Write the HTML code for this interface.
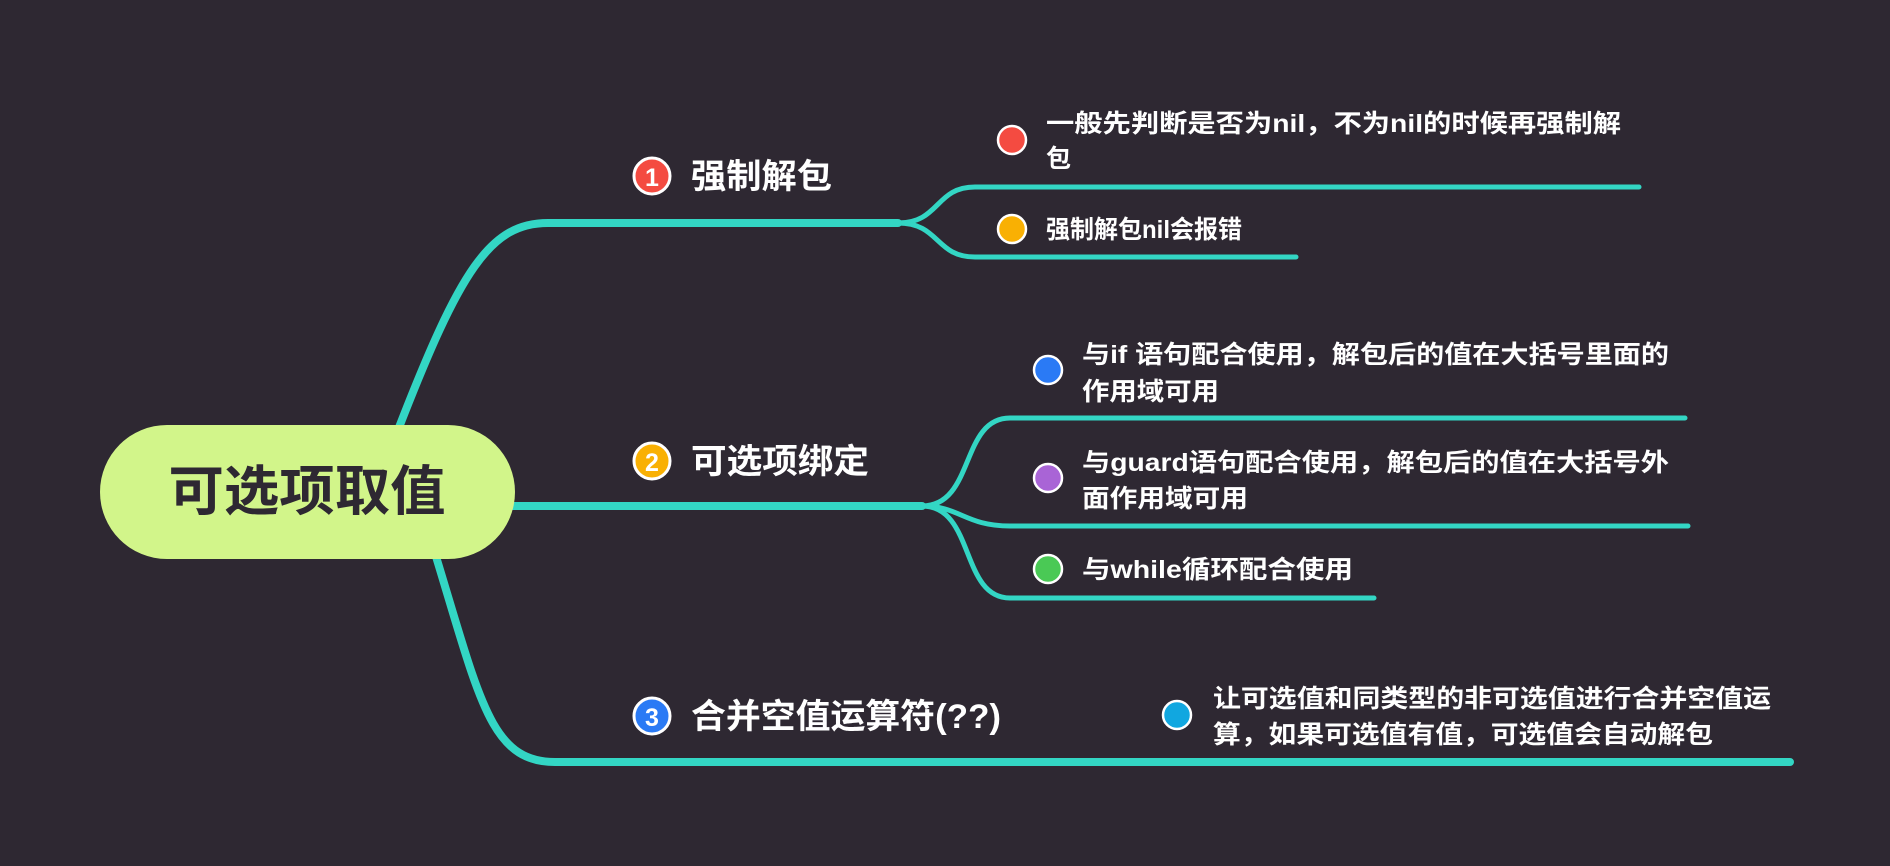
<!DOCTYPE html>
<html><head><meta charset="utf-8"><style>
html,body{margin:0;padding:0;background:#2e2832;width:1890px;height:866px;overflow:hidden}
svg{display:block}
text{font-family:"Liberation Sans","Noto Sans CJK SC",sans-serif;font-weight:bold;fill:#fff}
</style></head><body>
<svg width="1890" height="866" viewBox="0 0 1890 866" xmlns="http://www.w3.org/2000/svg">
<g fill="none" stroke="#33d6c4" stroke-linecap="round">
 <path d="M398,430 C460,270 490,223 548,223 L898,223" stroke-width="8"/>
 <path d="M898,223 C940,223 935,187 975,187 L1639,187" stroke-width="5"/>
 <path d="M898,223 C940,223 935,257 975,257 L1296,257" stroke-width="5"/>
 <path d="M500,506 L922,506" stroke-width="8"/>
 <path d="M922,506 C975,506 960,418 1010,418 L1685,418" stroke-width="5"/>
 <path d="M922,506 C960,506 965,526 1010,526 L1688,526" stroke-width="5"/>
 <path d="M922,506 C975,506 960,598 1010,598 L1374,598" stroke-width="5"/>
 <path d="M434,550 C480,700 490,762 555,762 L1790,762" stroke-width="8"/>
</g>
<rect x="100" y="425" width="415" height="134" rx="67" fill="#d2f58a"/>
<text x="307" y="510" text-anchor="middle" font-size="54" textLength="277" lengthAdjust="spacingAndGlyphs" style="fill:#2e2832">可选项取值</text>

<g stroke="#fff" stroke-width="3">
 <circle cx="652" cy="176" r="18" fill="#f44b41"/>
 <circle cx="652" cy="461" r="18" fill="#f9b003"/>
 <circle cx="652" cy="716" r="18" fill="#2a7af5"/>
</g>
<text x="652" y="186" text-anchor="middle" font-size="25">1</text>
<text x="652" y="471" text-anchor="middle" font-size="25">2</text>
<text x="652" y="726" text-anchor="middle" font-size="25">3</text>
<text x="691" y="188" font-size="34" textLength="141" lengthAdjust="spacingAndGlyphs">强制解包</text>
<text x="691" y="473" font-size="34" textLength="178" lengthAdjust="spacingAndGlyphs">可选项绑定</text>
<text x="691" y="728" font-size="34" textLength="310" lengthAdjust="spacingAndGlyphs">合并空值运算符(??)</text>

<g stroke="#fff" stroke-width="2.5">
 <circle cx="1012" cy="140" r="14" fill="#f44b41"/>
 <circle cx="1012" cy="229" r="14" fill="#f9b003"/>
 <circle cx="1048" cy="370" r="14" fill="#2a7af5"/>
 <circle cx="1048" cy="478" r="14" fill="#a964d6"/>
 <circle cx="1048" cy="569" r="14" fill="#4ac955"/>
 <circle cx="1177" cy="715" r="14" fill="#11a7e0"/>
</g>
<g font-size="25">
 <text x="1046" y="132" textLength="575" lengthAdjust="spacingAndGlyphs">一般先判断是否为nil，不为nil的时候再强制解</text>
 <text x="1046" y="167">包</text>
 <text x="1046" y="238" textLength="196" lengthAdjust="spacingAndGlyphs">强制解包nil会报错</text>
 <text x="1082" y="363" textLength="587" lengthAdjust="spacingAndGlyphs">与if 语句配合使用，解包后的值在大括号里面的</text>
 <text x="1082" y="400" textLength="137" lengthAdjust="spacingAndGlyphs">作用域可用</text>
 <text x="1082" y="471" textLength="587" lengthAdjust="spacingAndGlyphs">与guard语句配合使用，解包后的值在大括号外</text>
 <text x="1082" y="507" textLength="166" lengthAdjust="spacingAndGlyphs">面作用域可用</text>
 <text x="1082" y="578" textLength="271" lengthAdjust="spacingAndGlyphs">与while循环配合使用</text>
 <text x="1213" y="707" textLength="558" lengthAdjust="spacingAndGlyphs">让可选值和同类型的非可选值进行合并空值运</text>
 <text x="1213" y="743" textLength="500" lengthAdjust="spacingAndGlyphs">算，如果可选值有值，可选值会自动解包</text>
</g>
</svg>
</body></html>
